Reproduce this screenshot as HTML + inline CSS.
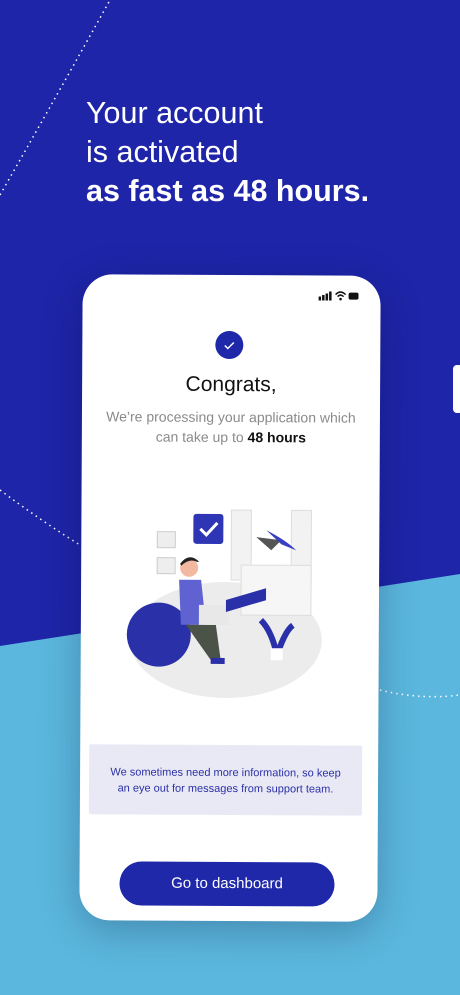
<!DOCTYPE html>
<html><head><meta charset="utf-8"><style>
*{margin:0;padding:0;box-sizing:border-box}
body{width:460px;height:995px;overflow:hidden;position:relative;font-family:"Liberation Sans",sans-serif;background:#1e25a8}
.bg2{position:absolute;inset:0;background:#5bb7de;clip-path:polygon(0 646px,460px 574px,460px 995px,0 995px)}
.h{position:absolute;left:86px;color:#fff;font-size:30.5px;line-height:39px;top:94px}
.h b{font-weight:700}
.card{position:absolute;left:81px;top:275px;width:298px;height:646px;background:#fff;border-radius:30px;transform:rotate(0.3deg);box-shadow:0 10px 40px rgba(0,0,40,.25)}
.tab{position:absolute;left:453px;top:365px;width:10px;height:48px;background:#fff;border-radius:4px}
.chk{position:absolute;left:133px;top:56px;width:28px;height:28px;border-radius:50%;background:#1e28a8}
.t1{position:absolute;top:98px;width:100%;text-align:center;font-size:21px;color:#111}
.t2{position:absolute;top:132px;width:100%;text-align:center;font-size:14px;line-height:20px;color:#8a8a8a}
.t2 b{color:#111;font-weight:700}
.info{position:absolute;left:9px;top:470px;width:273px;height:70px;background:#e9e9f5;color:#2a30a6;font-size:11px;line-height:16px;text-align:center;padding-top:20px;border-radius:2px}
.btn{position:absolute;left:40px;top:587px;width:215px;height:44px;border-radius:22px;background:#1e28a8;color:#fff;font-size:15px;text-align:center;line-height:44px}
</style></head><body>
<div class="bg2"></div>
<svg style="position:absolute;left:0;top:0" width="460" height="995">
<path d="M0 195 Q60 90 110 0" stroke="#fff" stroke-width="1.5" stroke-dasharray="1.5 4" fill="none"/>
<path d="M0 490 Q40 520 80 545" stroke="#fff" stroke-width="1.5" stroke-dasharray="1.5 4" fill="none"/>
<path d="M380 690 Q420 700 460 695" stroke="#fff" stroke-width="1.5" stroke-dasharray="1.5 4" fill="none"/>
</svg>
<div class="h">Your account<br>is activated<br><b>as fast as 48 hours.</b></div>
<div class="tab"></div>
<div class="card">
<svg style="position:absolute;left:236px;top:15px" width="40" height="10"><rect x="0" y="6" width="2.5" height="4" fill="#111"/><rect x="3.5" y="4.5" width="2.5" height="5.5" fill="#111"/><rect x="7" y="3" width="2.5" height="7" fill="#111"/><rect x="10.5" y="1" width="2.5" height="9" fill="#111"/><path d="M17 4 Q22 -1 27 4 M19 6 Q22 3 25 6" stroke="#111" stroke-width="1.5" fill="none"/><circle cx="22" cy="8.5" r="1.3" fill="#111"/><rect x="30" y="2" width="10" height="7" rx="2" fill="#111"/></svg>
<div class="chk"><svg width="28" height="28"><path d="M9.5 14.5l3 3 6-6" stroke="#fff" stroke-width="1.5" fill="none"/></svg></div>
<div class="t1">Congrats,</div>
<div class="t2">We’re processing your application which<br>can take up to <b>48 hours</b></div>
<svg style="position:absolute;left:40px;top:225px" width="220" height="200">
<ellipse cx="105" cy="140" rx="96" ry="58" fill="#ececec"/>
<rect x="110" y="10" width="20" height="70" fill="#f2f2f2" stroke="#ddd"/>
<rect x="170" y="10" width="20" height="90" fill="#f2f2f2" stroke="#ddd"/>
<rect x="120" y="65" width="70" height="50" fill="#f6f6f6" stroke="#ddd"/>
<rect x="36" y="32" width="18" height="16" fill="#eee" stroke="#ccc"/>
<rect x="36" y="58" width="18" height="16" fill="#eee" stroke="#ccc"/>
<rect x="72" y="14" width="30" height="30" rx="3" fill="#2f36b5"/>
<path d="M79 29l6 6 11-12" stroke="#fff" stroke-width="3" fill="none"/>
<path d="M135 37 L160 40 L150 50 Z" fill="#555"/>
<path d="M145 30 Q165 40 175 50 L160 44 Z" fill="#3a40c0"/>
<circle cx="38" cy="135" r="32" fill="#2a30a8"/>
<path d="M58 80 L80 80 L85 125 L60 125 Z" fill="#5f62d0"/>
<circle cx="68" cy="68" r="9" fill="#f3b8a0"/>
<path d="M59 64 Q68 52 78 62 L76 62 Q68 58 60 66Z" fill="#222"/>
<path d="M65 125 L95 125 L100 160 L90 160Z" fill="#4b5248"/>
<rect x="90" y="158" width="14" height="6" fill="#2a30a8"/>
<rect x="78" y="105" width="30" height="20" fill="#e8e8e8"/>
<path d="M105 100 L145 88 L145 100 L105 112Z" fill="#2a30a8"/>
<path d="M155 150 Q150 130 140 120 M158 150 Q165 130 172 125" stroke="#2a30a8" stroke-width="6" fill="none"/>
<rect x="150" y="148" width="12" height="12" fill="#fff"/>
</svg>
<div class="info">We sometimes need more information, so keep<br>an eye out for messages from support team.</div>
<div class="btn">Go to dashboard</div>
</div>
</body></html>
